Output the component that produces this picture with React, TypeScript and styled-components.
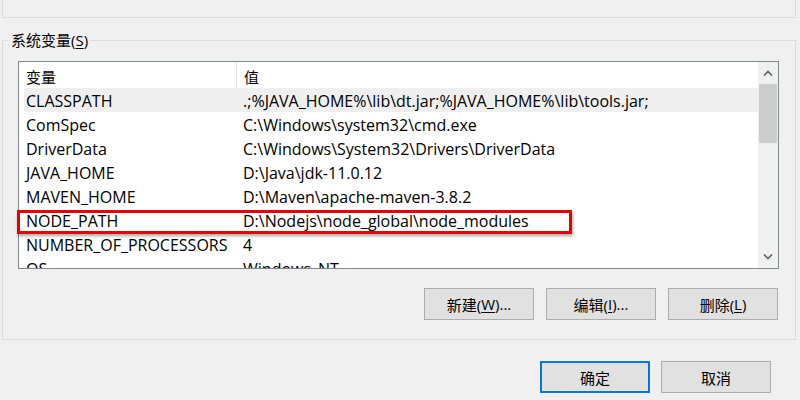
import React from "react";
import styled, { createGlobalStyle } from "styled-components";

const GlobalStyle = createGlobalStyle`
  html, body {
    margin: 0;
    padding: 0;
    background: #f0f0f0;
  }
  body {
    width: 800px;
    height: 400px;
    overflow: hidden;
    font-family: "Open Sans", "Noto Sans CJK SC", sans-serif;
    font-size: 15px;
    color: #000;
  }
`;

const Page = styled.div`
  width: 800px;
  height: 400px;
  display: flex;
  flex-direction: column;
`;

const UpperGroupTail = styled.div`
  height: 17px;
  margin: 0 4px 0 2px;
  border: 1px solid #dcdcdc;
  border-top: none;
`;

const GroupBox = styled.fieldset`
  margin: 12px 4px 0 2px;
  padding: 11px 16px 19px 15px;
  border: 1px solid #dcdcdc;
  min-width: 0;
`;

const GroupLegend = styled.legend`
  margin-left: -9px;
  padding: 0 2px;
  line-height: 20px;
  font-size: 15px;
`;

const Mnemonic = styled.span`
  text-decoration: underline;
  text-underline-offset: 2px;
`;

const ListBox = styled.div`
  position: relative;
  height: 206px;
  border: 1px solid #828790;
  background: #fff;
  display: flex;
`;

const ListBody = styled.div`
  flex: 1;
  overflow: hidden;
  display: flex;
  flex-direction: column;
`;

const HeaderRow = styled.div`
  height: 26px;
  display: flex;
  flex-shrink: 0;
`;

const HeaderCell = styled.div<{ $width?: number }>`
  ${(p) => (p.$width ? `width: ${p.$width}px;` : "flex: 1;")}
  height: 100%;
  display: flex;
  align-items: center;
  padding: 2px 0 0 7px;
  box-sizing: border-box;
  border-right: ${(p) => (p.$width ? "1px solid #e5e5e5" : "none")};
`;

const Rows = styled.div`
  padding-left: 5px;
  display: flex;
  flex-direction: column;
`;

const Row = styled.div<{ $selected?: boolean }>`
  height: 24px;
  box-sizing: border-box;
  padding-top: 1px;
  flex-shrink: 0;
  display: flex;
  align-items: center;
  font-size: 16px;
  line-height: 22px;
  background: ${(p) => (p.$selected ? "#efefef" : "transparent")};
`;

const NameCell = styled.div`
  width: 217px;
  padding-left: 2px;
  white-space: nowrap;
  overflow: hidden;
`;

const ValueCell = styled.div`
  flex: 1;
  white-space: nowrap;
`;

const ScrollBar = styled.div`
  width: 20px;
  background: #f0f0f0;
  display: flex;
  flex-direction: column;
  flex-shrink: 0;
`;

const ScrollArrow = styled.div`
  height: 22px;
  display: flex;
  align-items: center;
  justify-content: center;
  flex-shrink: 0;
`;

const ScrollThumb = styled.div`
  height: 59px;
  margin: 0 1px;
  background: #cdcdcd;
`;

const ScrollTrack = styled.div`
  flex: 1;
`;

const Highlight = styled.div`
  position: absolute;
  left: -2px;
  top: 148px;
  width: 555px;
  height: 24px;
  box-sizing: border-box;
  border: 3px solid #e60000;
  box-shadow: 1px 2px 3px rgba(0, 0, 0, 0.35);
  pointer-events: none;
`;

const ButtonRow = styled.div<{ $gap: number }>`
  display: flex;
  justify-content: flex-end;
  gap: ${(p) => p.$gap}px;
`;

const GroupButtons = styled(ButtonRow)`
  margin-top: 19px;
  padding-right: 1px;
`;

const DialogButtons = styled(ButtonRow)`
  margin-top: 21px;
  padding-right: 29px;
`;

const Button = styled.button<{ $default?: boolean }>`
  width: 110px;
  height: 32px;
  box-sizing: border-box;
  background: #e1e1e1;
  border: ${(p) => (p.$default ? "2px solid #0078d7" : "1px solid #adadad")};
  font-family: "Open Sans", "Noto Sans CJK SC", sans-serif;
  font-size: 15px;
  color: #000;
  padding: 0;
  display: flex;
  align-items: center;
  justify-content: center;
`;

const Chevron: React.FC<{ up?: boolean }> = ({ up }) => (
  <svg width="10" height="6" viewBox="0 0 10 6">
    <path
      d={up ? "M1 5.5 L5 1.5 L9 5.5" : "M1 0.5 L5 4.5 L9 0.5"}
      fill="none"
      stroke="#606060"
      strokeWidth="1.6"
    />
  </svg>
);

const variables = [
  { name: "CLASSPATH", value: ".;%JAVA_HOME%\\lib\\dt.jar;%JAVA_HOME%\\lib\\tools.jar;" },
  { name: "ComSpec", value: "C:\\Windows\\system32\\cmd.exe" },
  { name: "DriverData", value: "C:\\Windows\\System32\\Drivers\\DriverData" },
  { name: "JAVA_HOME", value: "D:\\Java\\jdk-11.0.12" },
  { name: "MAVEN_HOME", value: "D:\\Maven\\apache-maven-3.8.2" },
  { name: "NODE_PATH", value: "D:\\Nodejs\\node_global\\node_modules" },
  { name: "NUMBER_OF_PROCESSORS", value: "4" },
  { name: "OS", value: "Windows_NT" },
];

const App: React.FC = () => {
  return (
    <Page>
      <GlobalStyle />
      <UpperGroupTail />
      <GroupBox>
        <GroupLegend>
          系统变量(<Mnemonic>S</Mnemonic>)
        </GroupLegend>
        <ListBox>
          <ListBody>
            <HeaderRow>
              <HeaderCell $width={218}>变量</HeaderCell>
              <HeaderCell>值</HeaderCell>
            </HeaderRow>
            <Rows>
              {variables.map((v, i) => (
                <Row key={v.name} $selected={i === 0}>
                  <NameCell>{v.name}</NameCell>
                  <ValueCell>{v.value}</ValueCell>
                </Row>
              ))}
            </Rows>
          </ListBody>
          <ScrollBar>
            <ScrollArrow>
              <Chevron up />
            </ScrollArrow>
            <ScrollThumb />
            <ScrollTrack />
            <ScrollArrow>
              <Chevron />
            </ScrollArrow>
          </ScrollBar>
          <Highlight />
        </ListBox>
        <GroupButtons $gap={12}>
          <Button>
            新建(<Mnemonic>W</Mnemonic>)...
          </Button>
          <Button>
            编辑(<Mnemonic>I</Mnemonic>)...
          </Button>
          <Button>
            删除(<Mnemonic>L</Mnemonic>)
          </Button>
        </GroupButtons>
      </GroupBox>
      <DialogButtons $gap={11}>
        <Button $default>确定</Button>
        <Button>取消</Button>
      </DialogButtons>
    </Page>
  );
};

export default App;
